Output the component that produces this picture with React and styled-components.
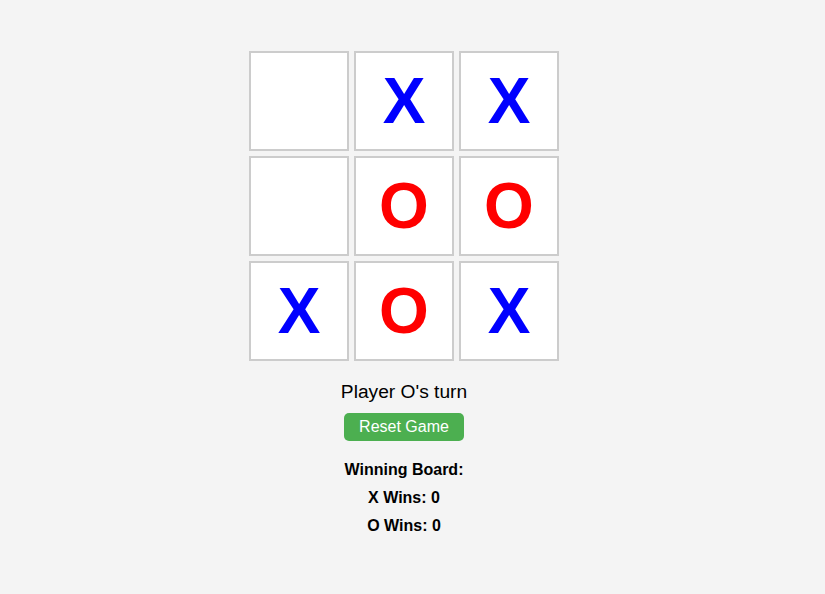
import React from 'react';
import styled, { createGlobalStyle } from "styled-components";

const GlobalStyle = createGlobalStyle`
	body {
		margin: 0;
		background-color: #f4f4f4;
		font-family: "Liberation Sans", Arial, sans-serif;
	}
`;

const Container = styled.div`
	display: flex;
	flex-direction: column;
	align-items: center;
	padding: 51px 17px 0 0;
`;

const Board = styled.div`
	display: grid;
	grid-template-columns: repeat(3, 100px);
	grid-template-rows: repeat(3, 100px);
	gap: 5px;
`;

const Cell = styled.div`
	box-sizing: border-box;
	display: flex;
	align-items: center;
	justify-content: center;
	background-color: #fff;
	border: 2px solid #ccc;
	font-size: 64px;
	font-weight: bold;
	color: ${(props) => (props.value === "X" ? "#0000ff" : "#ff0000")};
`;

const Status = styled.div`
	margin-top: 20px;
	font-size: 19.2px;
	line-height: 22px;
	color: #000;
`;

const Button = styled.button`
	margin-top: 10px;
	padding: 5px 15px;
	border: none;
	border-radius: 5px;
	background-color: #4caf50;
	color: #fff;
	font-family: inherit;
	font-size: 16px;
	line-height: 18px;
	cursor: pointer;
`;

const Stats = styled.div`
	margin-top: 20px;
	display: flex;
	flex-direction: column;
	align-items: center;
	gap: 10px;
`;

const StatLine = styled.div`
	font-size: 16px;
	line-height: 18px;
	font-weight: bold;
	color: #000;
`;

const cells = ["", "X", "X", "", "O", "O", "X", "O", "X"];

const App = () => {
	return (
		<Container>
			<GlobalStyle />
			<Board>
				{cells.map((value, i) => (
					<Cell key={i} value={value}>
						{value}
					</Cell>
				))}
			</Board>
			<Status>Player O's turn</Status>
			<Button>Reset Game</Button>
			<Stats>
				<StatLine>Winning Board:</StatLine>
				<StatLine>X Wins: 0</StatLine>
				<StatLine>O Wins: 0</StatLine>
			</Stats>
		</Container>
	);
};

export default App;
